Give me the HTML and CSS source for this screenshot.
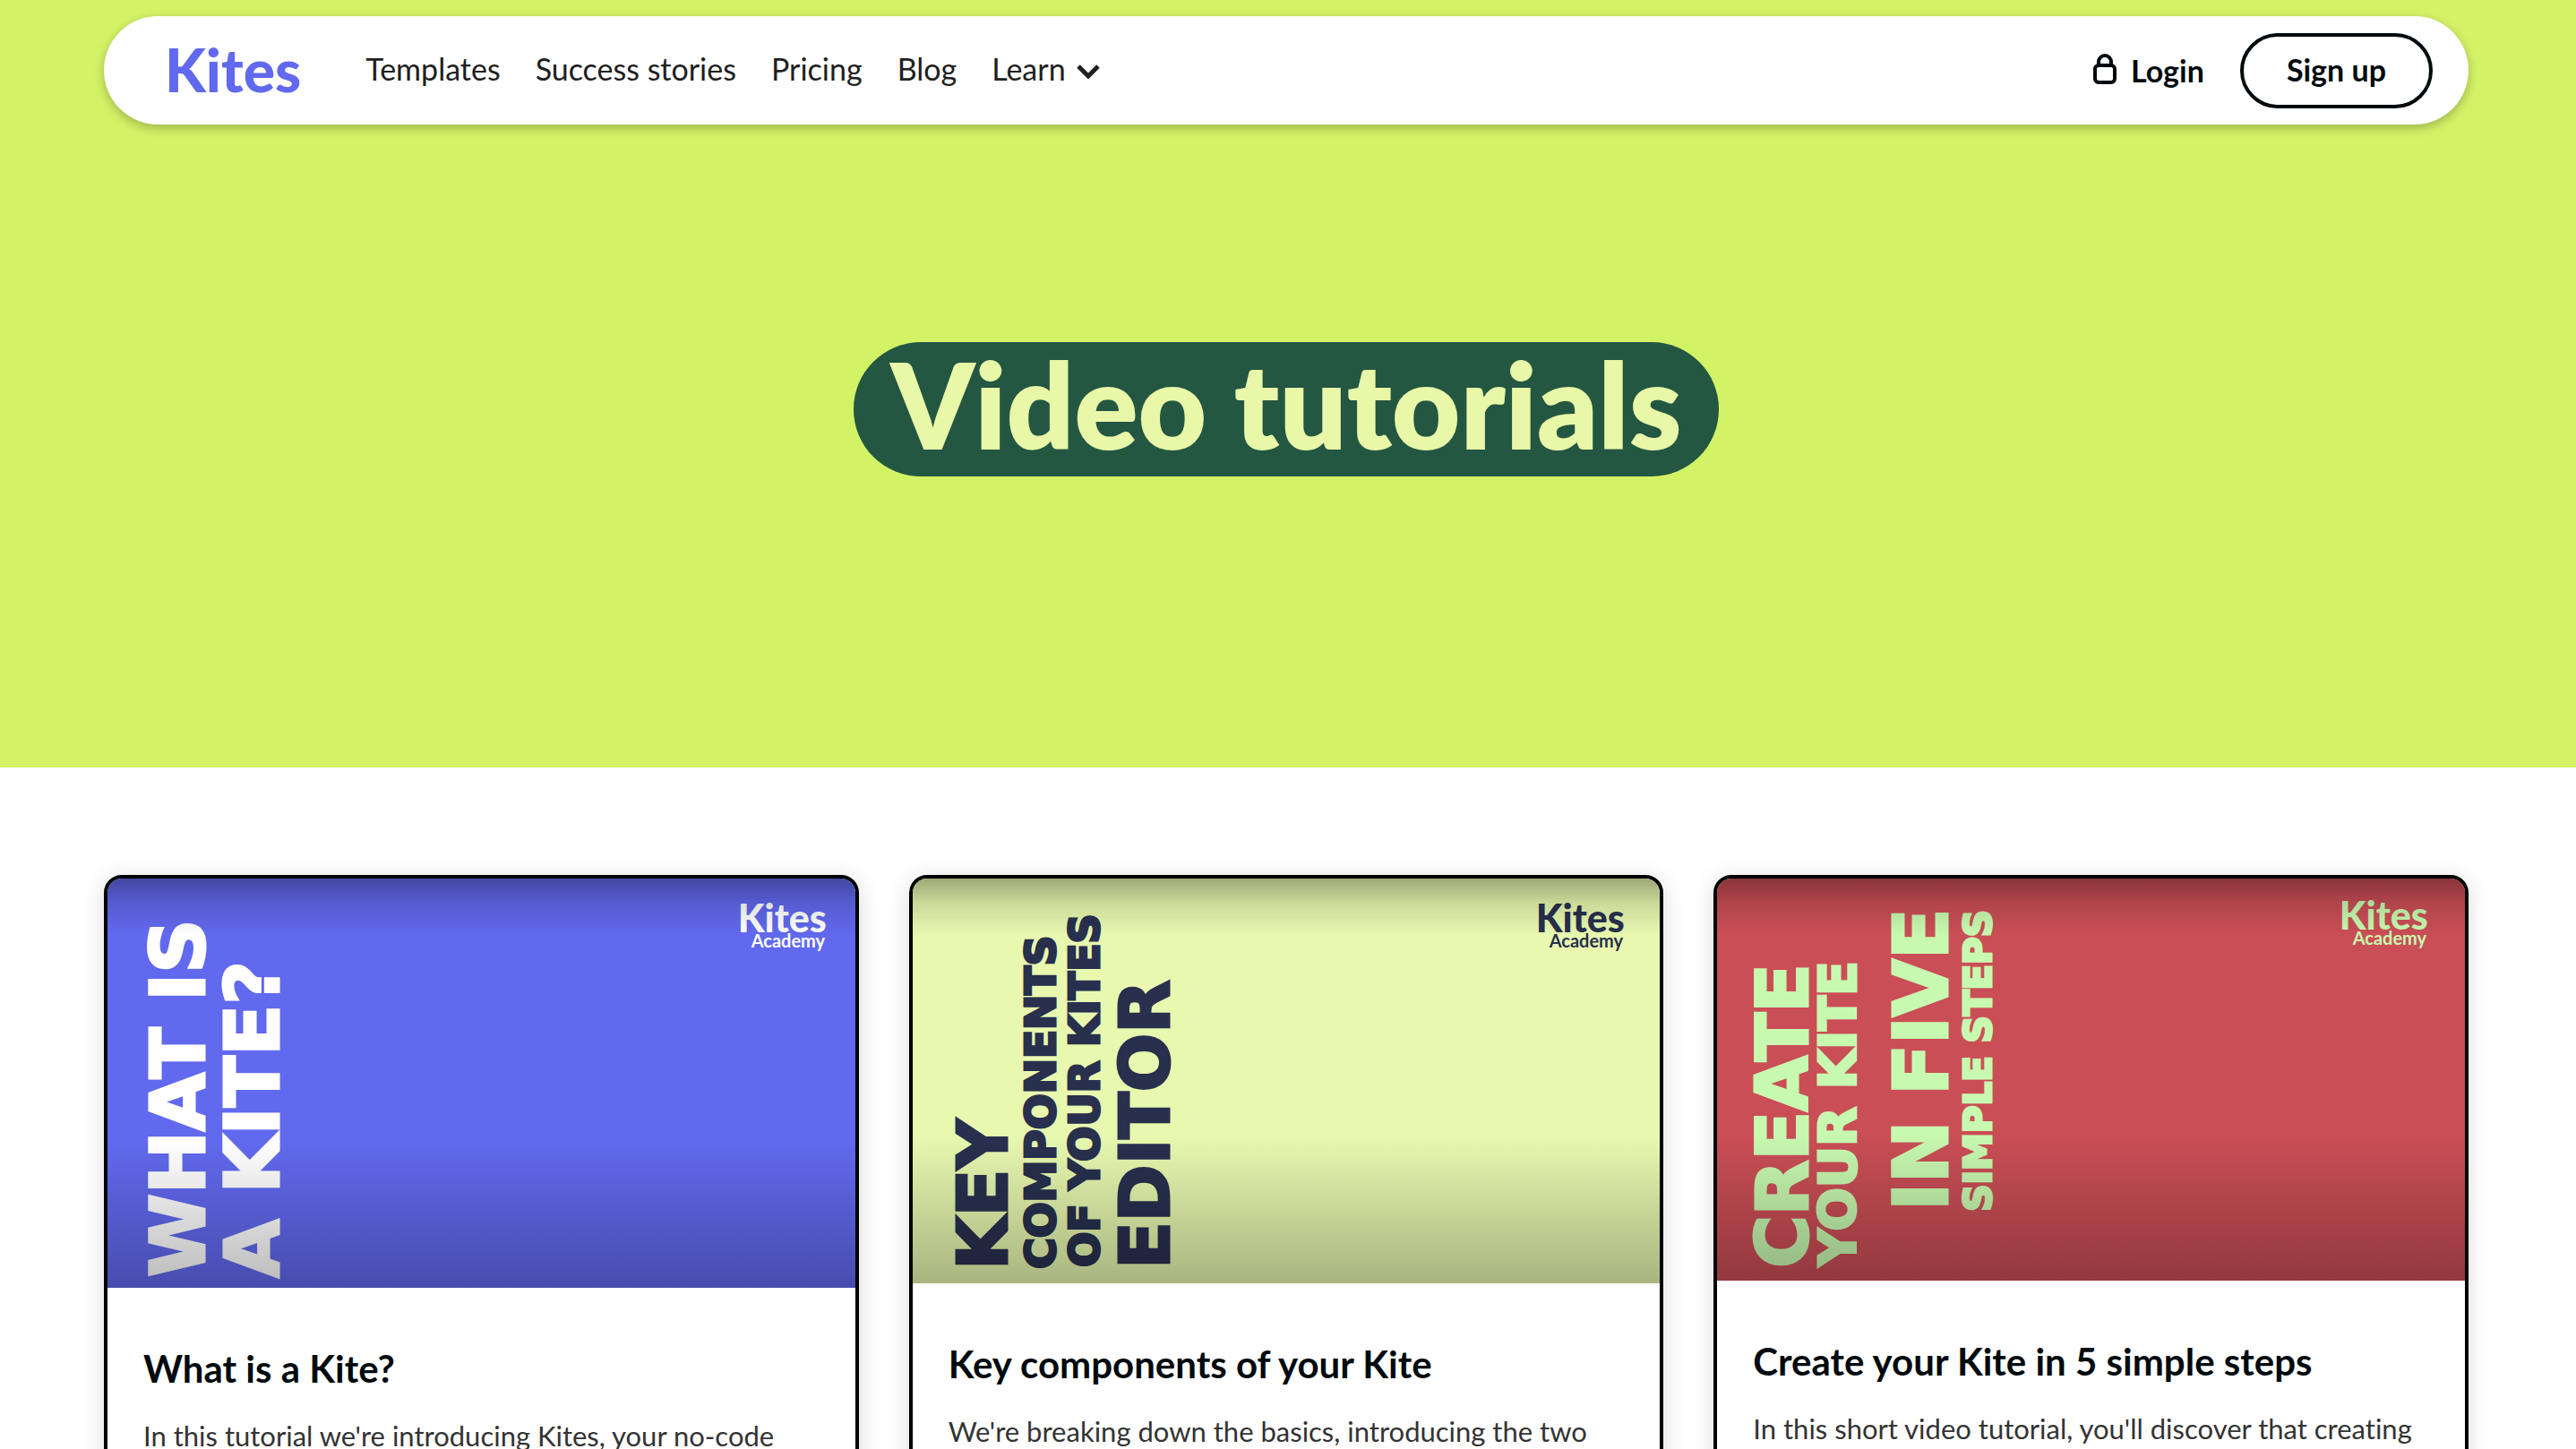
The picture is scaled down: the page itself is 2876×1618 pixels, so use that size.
FILE: index.html
```
<!DOCTYPE html>
<html lang="en">

<head>
    <meta charset="UTF-8">
    <meta name="viewport" content="width=device-width, initial-scale=1.0">
    <title>Video tutorials | Kites</title>
    <link rel="stylesheet" href="styles.css">
</head>

<body>
    <div class="hero">
        <header class="header">
            <a href="#" class="logo">Kites</a>
            <nav class="nav">
                <a href="#">Templates</a>
                <a href="#">Success stories</a>
                <a href="#">Pricing</a>
                <a href="#">Blog</a>
                <button type="button" class="nav_learn">
                    Learn
                    <svg class="chevron" viewBox="0 0 26 16" aria-hidden="true">
                        <path d="M2 2l11 11L24 2" fill="none" stroke="currentColor" stroke-width="5" />
                    </svg>
                </button>
            </nav>
            <div class="account">
                <a href="#" class="login">
                    <svg class="lock" viewBox="0 0 26 34" aria-hidden="true">
                        <rect x="2" y="13" width="22" height="19" rx="4" />
                        <path d="M6 13V9a7 7 0 0 1 14 0v4" />
                    </svg>
                    Login
                </a>
                <a href="#" class="signup">Sign up</a>
            </div>
        </header>
        <h1 class="hero_title">Video tutorials</h1>
    </div>

    <main class="tutorials">
        <article class="card">
            <a href="#" class="thumb thumb_blue">
                <svg viewBox="0 0 835 457" role="img" aria-label="What is a Kite?">
                    <g class="poster">
                        <text transform="translate(108 445) rotate(-90)" font-size="84">WHAT IS</text>
                        <text transform="translate(191 446) rotate(-90)" font-size="84">A KITE?</text>
                    </g>
                    <text class="brand" x="704" y="60">Kites</text>
                    <text class="academy" x="719" y="77">Academy</text>
                </svg>
            </a>
            <div class="card_body">
                <h2>What is a Kite?</h2>
                <p>In this tutorial we're introducing Kites, your no-code</p>
            </div>
        </article>

        <article class="card">
            <a href="#" class="thumb thumb_lime">
                <svg viewBox="0 0 835 452" role="img" aria-label="Key components of your Kites editor">
                    <g class="poster">
                        <text transform="translate(105 437) rotate(-90)" font-size="77">KEY</text>
                        <text transform="translate(159 436) rotate(-90)" font-size="47">COMPONENTS</text>
                        <text transform="translate(208 434) rotate(-90)" font-size="46">OF YOUR KITES</text>
                        <text transform="translate(286 436) rotate(-90)" font-size="77">EDITOR</text>
                    </g>
                    <text class="brand" x="696" y="60">Kites</text>
                    <text class="academy" x="711" y="77">Academy</text>
                </svg>
            </a>
            <div class="card_body">
                <h2>Key components of your Kite</h2>
                <p>We're breaking down the basics, introducing the two</p>
            </div>
        </article>

        <article class="card">
            <a href="#" class="thumb thumb_red">
                <svg viewBox="0 0 835 449" role="img" aria-label="Create your Kite in five simple steps">
                    <g class="poster">
                        <text transform="translate(101 435) rotate(-90)" font-size="80">CREATE</text>
                        <text transform="translate(155 433) rotate(-90)" font-size="57">YOUR KITE</text>
                        <text transform="translate(257 371) rotate(-90)" font-size="83">IN FIVE</text>
                        <text transform="translate(306 372) rotate(-90)" font-size="42">SIMPLE STEPS</text>
                    </g>
                    <text class="brand" x="695" y="57">Kites</text>
                    <text class="academy" x="710" y="74">Academy</text>
                </svg>
            </a>
            <div class="card_body">
                <h2>Create your Kite in 5 simple steps</h2>
                <p>In this short video tutorial, you'll discover that creating</p>
            </div>
        </article>
    </main>
</body>

</html>
```
FILE: styles.css
```
* {
    margin: 0;
    padding: 0;
    box-sizing: border-box;
}

body {
    display: flex;
    flex-direction: column;
    height: 100vh;
    overflow: hidden;
    font-family: Lato, "Liberation Sans", sans-serif;
    font-variant-ligatures: none;
    color: #202020;
    background-color: #fff;
}

a {
    color: inherit;
    text-decoration: none;
}

.hero {
    flex: none;
    padding: 18px 120px 325px 116px;
    background-color: #d3f367;
}

.header {
    display: flex;
    align-items: center;
    padding: 19px 40px 18px 68px;
    border-radius: 64px;
    background-color: #fff;
    box-shadow: 0 4px 12px rgba(0, 0, 0, .25);
}

.logo {
    font-size: 66px;
    font-weight: 900;
    line-height: 72px;
    color: #6169ee;
    padding-bottom: 2px;
}

.nav {
    display: flex;
    align-items: center;
    gap: 39px;
    margin-left: 72px;
    padding-bottom: 4px;
    font-size: 34px;
    line-height: 40px;
}

.nav_learn {
    display: flex;
    align-items: center;
    gap: 12px;
    border: none;
    background: none;
    font: inherit;
    color: inherit;
    cursor: pointer;
}

.chevron {
    width: 26px;
    height: 16px;
    margin-top: 6px;
}

.account {
    display: flex;
    align-items: center;
    gap: 40px;
    margin-left: auto;
    font-size: 34px;
    font-weight: 700;
    line-height: 40px;
    color: #000a0e;
}

.login {
    display: flex;
    align-items: center;
    gap: 16px;
}

.lock {
    width: 26px;
    height: 34px;
    margin-bottom: 4px;
    fill: none;
    stroke: currentColor;
    stroke-width: 4;
}

.signup {
    padding: 17px 48px 19px;
    border: 4px solid #000a0e;
    border-radius: 42px;
}

.hero_title {
    width: fit-content;
    margin: 243px auto 0;
    padding: 0 42px 12px;
    border-radius: 75px;
    font-size: 132px;
    font-weight: 800;
    line-height: 138px;
    color: #e8f7a8;
    background-color: #245742;
}

.tutorials {
    flex: 1 0 auto;
    display: grid;
    grid-template-columns: repeat(3, 1fr);
    gap: 56px;
    padding: 120px 120px 0 116px;
}

.card {
    min-height: 800px;
    border: 4px solid #000;
    border-radius: 20px;
    overflow: hidden;
    box-shadow: 0 4px 24px rgba(0, 0, 0, .15);
}

.thumb {
    display: block;
    position: relative;
}

.thumb svg {
    display: block;
    width: 100%;
    fill: currentColor;
    stroke: currentColor;
}

/* dark fades at the top and bottom of the video */
.thumb::after {
    content: "";
    position: absolute;
    inset: 0;
    background:
        linear-gradient(rgba(0, 0, 0, .32), rgba(0, 0, 0, .12) 28px, rgba(0, 0, 0, 0) 64px),
        linear-gradient(to top, rgba(0, 0, 0, .27), rgba(0, 0, 0, .17) 64px, rgba(0, 0, 0, 0) 164px);
}

.thumb_blue {
    color: #fff;
    background-color: #6169ee;
}

.thumb_lime {
    color: #28304e;
    background-color: #e8f8af;
}

.thumb_red {
    color: #c8f9b0;
    background-color: #ca4e56;
}

.poster {
    font-family: "DejaVu Sans", sans-serif;
    font-weight: 700;
    stroke-width: 3;
}

.brand {
    font-size: 43px;
    font-weight: 900;
    stroke: none;
}

.academy {
    font-size: 20px;
    font-weight: 700;
    stroke: none;
}

.card_body {
    padding: 65px 40px;
}

.card_body h2 {
    font-size: 42px;
    font-weight: 700;
    line-height: 50px;
    color: #000a0e;
}

.card_body p {
    margin-top: 26px;
    font-size: 31px;
    line-height: 48px;
    color: #333;
}
```
